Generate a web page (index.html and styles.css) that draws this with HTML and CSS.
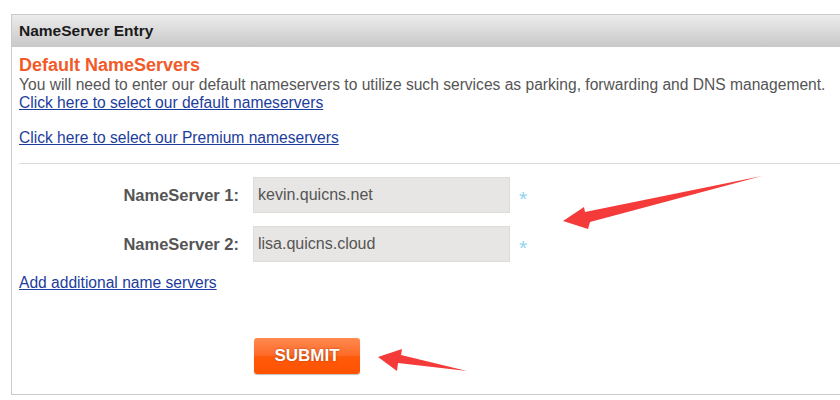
FILE: index.html
```html
<!DOCTYPE html>
<html>
<head>
<meta charset="utf-8">
<link rel="stylesheet" href="styles.css">
</head>
<body>
<div class="page">
  <div class="box">
    <div class="box-head">NameServer Entry</div>
    <div class="box-body">
      <h2 class="title">Default NameServers</h2>
      <p class="desc">You will need to enter our default nameservers to utilize such services as parking, forwarding and DNS management.</p>
      <a class="link" href="#">Click here to select our default nameservers</a>
      <a class="link link-premium" href="#">Click here to select our Premium nameservers</a>
      <div class="rule"></div>
      <div class="form">
        <label class="label">NameServer 1:</label>
        <div class="input">kevin.quicns.net</div>
        <span class="req">*</span>
        <label class="label">NameServer 2:</label>
        <div class="input">lisa.quicns.cloud</div>
        <span class="req">*</span>
      </div>
      <a class="link link-add" href="#">Add additional name servers</a>
      <div class="actions">
        <button class="submit">SUBMIT</button>
      </div>
    </div>
  </div>
  <svg class="arrows" width="840" height="400" viewBox="0 0 840 400">
    <polygon points="563,221 584,207 585,212 762,176 590,222 588,229" fill="#f53a3a"/>
    <polygon points="378,357 402,349 401,355 467,371 398,363 397,371" fill="#f53a3a"/>
  </svg>
</div>
</body>
</html>
```
FILE: styles.css
```css
html, body {
  margin: 0;
  padding: 0;
  background: #fff;
}
body {
  font-family: "Liberation Sans", Arial, sans-serif;
  color: #555;
}
.page {
  position: relative;
  width: 840px;
  height: 400px;
  overflow: hidden;
  padding: 14px 0 0 11px;
  box-sizing: border-box;
}
.box {
  width: 860px;
  height: 381px;
  border: 1px solid #cacaca;
  box-sizing: border-box;
}
.box-head {
  height: 32px;
  line-height: 31px;
  padding-left: 7px;
  font-size: 15.5px;
  font-weight: bold;
  color: #1a1a1a;
  background: linear-gradient(#ececec, #c8c8c8);
}
.box-body {
  padding: 8px 0 0 7px;
  display: flex;
  flex-direction: column;
  align-items: flex-start;
}
.title {
  margin: 0 0 1px;
  font-size: 18px;
  line-height: 20px;
  font-weight: bold;
  color: #f15a29;
}
.desc {
  margin: 0;
  font-size: 15.6px;
  line-height: 18px;
  color: #555;
}
.link {
  font-size: 15.6px;
  line-height: 18px;
  color: #1c3d9c;
  text-decoration: underline;
}
.link-premium {
  margin-top: 17px;
}
.rule {
  align-self: stretch;
  height: 1px;
  background: #dcdcdc;
  margin-top: 16px;
}
.form {
  display: grid;
  grid-template-columns: 220px 257px auto;
  column-gap: 14px;
  row-gap: 13px;
  align-items: center;
  margin-top: 13px;
}
.label {
  text-align: right;
  font-size: 16.5px;
  font-weight: bold;
  color: #555;
}
.input {
  height: 36px;
  box-sizing: border-box;
  border: 1px solid #dcdcdc;
  background: #e8e6e4;
  padding-left: 4px;
  font-size: 16px;
  line-height: 34px;
  color: #555;
}
.req {
  margin-left: -5px;
  font-size: 21px;
  line-height: 20px;
  color: #8fd4f2;
  padding-top: 7px;
}
.link-add {
  margin-top: 12px;
}
.actions {
  margin-top: 46px;
  padding-left: 235px;
}
.submit {
  width: 106px;
  height: 36px;
  border: none;
  border-radius: 3px;
  background: linear-gradient(#ff8a50 0%, #ff6a28 48%, #ff5a0a 52%, #ff5200 100%);
  box-shadow: 0 1px 1px rgba(0,0,0,0.25);
  color: #fff;
  font-family: "Liberation Sans", Arial, sans-serif;
  font-weight: bold;
  font-size: 17px;
  text-shadow: 0 0 2px rgba(120,40,0,0.7);
  padding: 0;
}
.arrows {
  position: absolute;
  left: 0;
  top: 0;
  pointer-events: none;
}
```
